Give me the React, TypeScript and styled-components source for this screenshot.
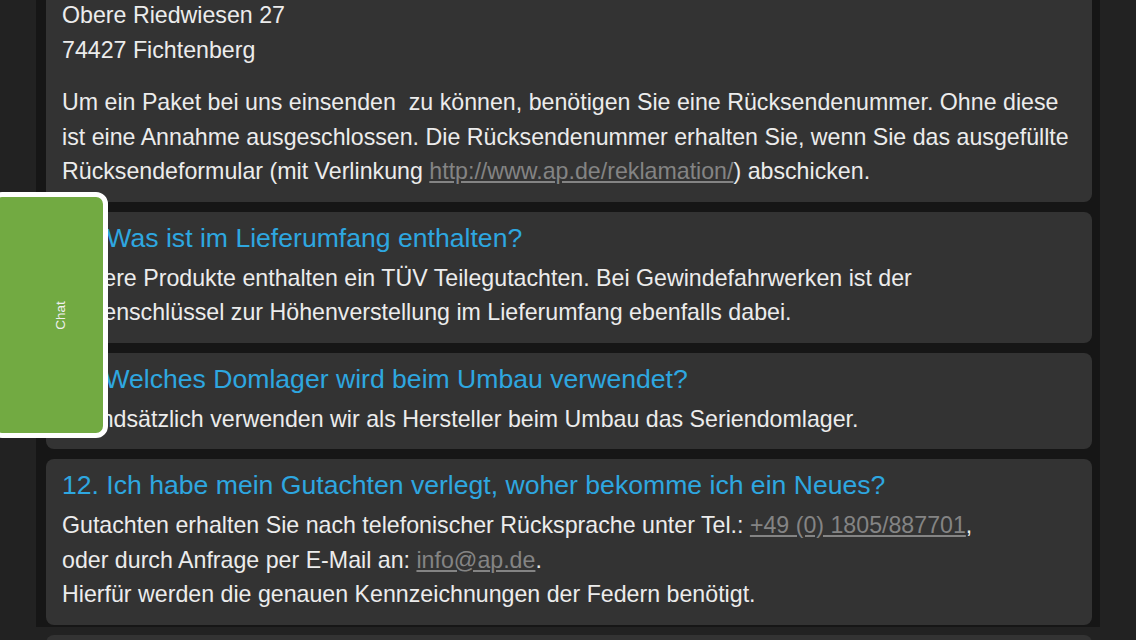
import * as React from "react";
import styled, { createGlobalStyle } from "styled-components";

const GlobalStyle = createGlobalStyle`
  html, body {
    margin: 0;
    padding: 0;
    background: #222222;
    overflow: hidden;
  }
  body {
    font-family: "Liberation Sans", Arial, sans-serif;
  }
`;

const SPage = styled.div`
  height: 640px;
  overflow: hidden;
  padding: 0 36px;
`;

const SColumn = styled.div`
  background: #161616;
  height: 100%;
  padding: 0 8px 0 10px;
  box-sizing: border-box;
`;

const SList = styled.div`
  display: flex;
  flex-direction: column;
  gap: 10px;
  margin-top: -13px;
`;

const SCard = styled.div`
  background: #333333;
  border-radius: 8px;
  padding: 11px 16px 13px;
  color: #ececec;
  font-size: 23.2px;
  line-height: 34.5px;
`;

const SQuestion = styled.h3`
  margin: 0 0 8px;
  font-weight: 400;
  font-size: 26.6px;
  line-height: 30px;
  color: #2ea7e0;
`;

const SText = styled.p<{ gap?: number }>`
  margin: ${({ gap }) => (gap ? `${gap}px 0 0` : "0")};
`;

const SLink = styled.a`
  color: #848484;
  text-decoration: underline;
`;

const SChatTab = styled.div`
  position: fixed;
  left: -10px;
  top: 192px;
  width: 118px;
  height: 246px;
  border: 5px solid #ffffff;
  border-radius: 12px;
  background: #72aa42;
  display: flex;
  align-items: center;
  justify-content: center;
  padding-left: 22px;
  box-sizing: border-box;
  cursor: pointer;
`;

const SChatLabel = styled.span`
  transform: rotate(-90deg);
  color: #f0f0f0;
  font-family: "Liberation Sans", Arial, sans-serif;
  font-size: 13.5px;
  white-space: nowrap;
`;

const App = () => (
  <>
    <GlobalStyle />
    <SPage>
      <SColumn>
        <SList>
          <SCard>
            <SText>
              Obere Riedwiesen 27
              <br />
              74427 Fichtenberg
            </SText>
            <SText gap={18}>
              Um ein Paket bei uns einsenden&nbsp; zu können, benötigen Sie eine
              Rücksendenummer. Ohne diese ist eine Annahme ausgeschlossen. Die
              Rücksendenummer erhalten Sie, wenn Sie das ausgefüllte
              Rücksendeformular (mit Verlinkung{" "}
              <SLink href="#">http://www.ap.de/reklamation/</SLink>) abschicken.
            </SText>
          </SCard>
          <SCard>
            <SQuestion>10. Was ist im Lieferumfang enthalten?</SQuestion>
            <SText>
              Unsere Produkte enthalten ein TÜV Teilegutachten. Bei
              Gewindefahrwerken ist der
              <br />
              Hakenschlüssel zur Höhenverstellung im Lieferumfang ebenfalls dabei.
            </SText>
          </SCard>
          <SCard>
            <SQuestion>11. Welches Domlager wird beim Umbau verwendet?</SQuestion>
            <SText>
              Grundsätzlich verwenden wir als Hersteller beim Umbau das
              Seriendomlager.
            </SText>
          </SCard>
          <SCard>
            <SQuestion>
              12. Ich habe mein Gutachten verlegt, woher bekomme ich ein Neues?
            </SQuestion>
            <SText>
              Gutachten erhalten Sie nach telefonischer Rücksprache unter Tel.:{" "}
              <SLink href="#">+49 (0) 1805/887701</SLink>,
              <br />
              oder durch Anfrage per E-Mail an: <SLink href="#">info@ap.de</SLink>.
              <br />
              Hierfür werden die genauen Kennzeichnungen der Federn benötigt.
            </SText>
          </SCard>
          <SCard>
            <SQuestion>13. Wie lange dauert die Lieferung?</SQuestion>
            <SText>&nbsp;</SText>
          </SCard>
        </SList>
      </SColumn>
    </SPage>
    <SChatTab>
      <SChatLabel>Chat</SChatLabel>
    </SChatTab>
  </>
);

export default App;
